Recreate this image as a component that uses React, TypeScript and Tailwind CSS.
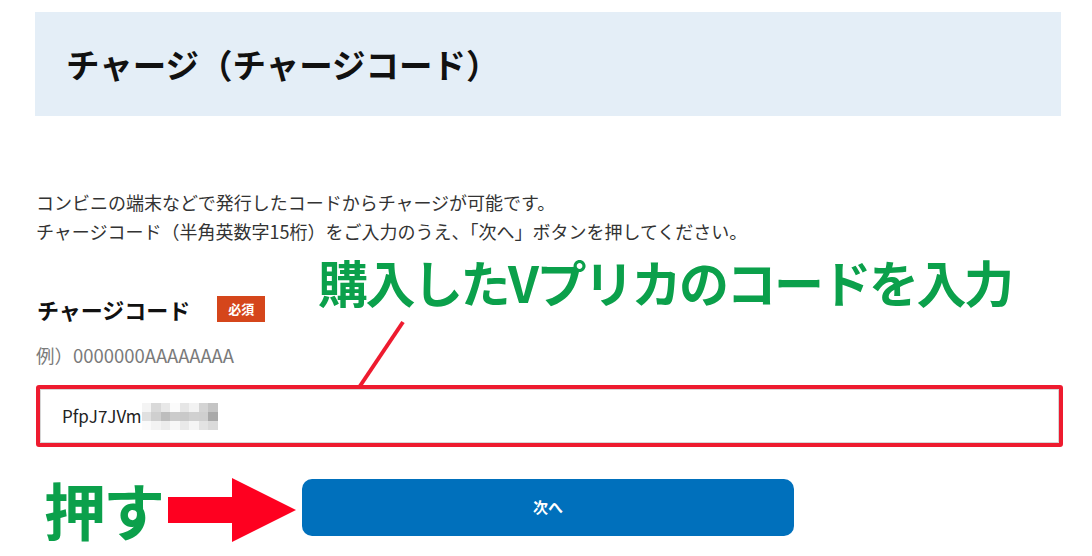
import React from "react";

const mosaic = [
  ["#f4f4f4", "#d9d9d9", "#e8e8e8", "#fbfbfb", "#e6e6e6", "#f2f2f2", "#d4d4d4", "#c4c4c4"],
  ["#e0e0e0", "#cfcfcf", "#bdbdbd", "#cbcbcb", "#c9c9c9", "#d0d0d0", "#cfcfcf", "#a9a9a9"],
  ["#fafafa", "#f3f3f3", "#ececec", "#f7f7f7", "#e9e9e9", "#f5f5f5", "#e3e3e3", "#dadada"],
];

export default function App() {
  return (
    <div
      className="relative w-[1092px] h-[556px] overflow-hidden bg-white text-[#222]"
      style={{ fontFamily: '"Noto Sans CJK JP", "Noto Sans", sans-serif' }}
    >
      <div className="ml-[35px] mt-[12px] flex h-[104px] w-[1026px] items-center bg-[#e4eef7] pl-[31px]">
        <h1 className="text-[33.5px] font-bold leading-none text-[#111]">チャージ（チャージコード）</h1>
      </div>

      <div className="ml-[36px] mt-[72px] text-[18px] leading-[29px] text-[#333]">
        <p>コンビニの端末などで発行したコードからチャージが可能です。</p>
        <p>チャージコード（半角英数字15桁）をご入力のうえ、「次へ」ボタンを押してください。</p>
      </div>

      <div className="ml-[37px] mt-[50px] flex h-[26px] items-center">
        <span className="text-[22px] font-bold leading-none text-[#111]">チャージコード</span>
        <span className="ml-[27px] flex h-[26px] w-[48px] items-center justify-center bg-[#d5461b] text-[13px] font-bold text-white">
          必須
        </span>
      </div>

      <p className="ml-[36px] mt-[19px] text-[18.5px] leading-[29px] text-[#7a7a7a]">例）0000000AAAAAAAA</p>

      <div className="ml-[36px] mt-[15px] h-[62px] w-[1027px] rounded-[3px] border-[4px] border-[#ee1b2f]">
        <div className="flex h-full items-center border border-[#d6d6d6] pl-[21px]">
          <span className="text-[17px] text-[#222]">PfpJ7JVm</span>
          <div className="flex flex-col">
            {mosaic.map((row, i) => (
              <div key={i} className="flex">
                {row.map((c, j) => (
                  <div key={j} className="h-[9px] w-[9.5px]" style={{ backgroundColor: c }} />
                ))}
              </div>
            ))}
          </div>
        </div>
      </div>

      <div className="ml-[302px] mt-[32px] flex h-[57px] w-[492px] items-center justify-center rounded-[10px] bg-[#0070bc]">
        <span className="text-[15px] font-bold text-white">次へ</span>
      </div>

      {/* annotations */}
      <div
        className="absolute left-[318px] top-[256px] text-[50px] font-bold leading-none tracking-[-2.5px] text-[#0ba04b]"
        style={{ fontFamily: '"Noto Sans CJK JP", sans-serif' }}
      >
        購入したVプリカのコードを入力
      </div>
      <svg className="absolute left-0 top-0" width="1092" height="556">
        <line x1="403" y1="322" x2="360" y2="386" stroke="#ee1b2f" strokeWidth="4" />
        <polygon points="168,497 232,497 232,478 296,510 232,542 232,523 168,523" fill="#fe0020" />
      </svg>
      <div className="absolute left-[44px] top-[478px] text-[62px] font-bold leading-none tracking-[-3px] text-[#0ba04b]">押す</div>
    </div>
  );
}
